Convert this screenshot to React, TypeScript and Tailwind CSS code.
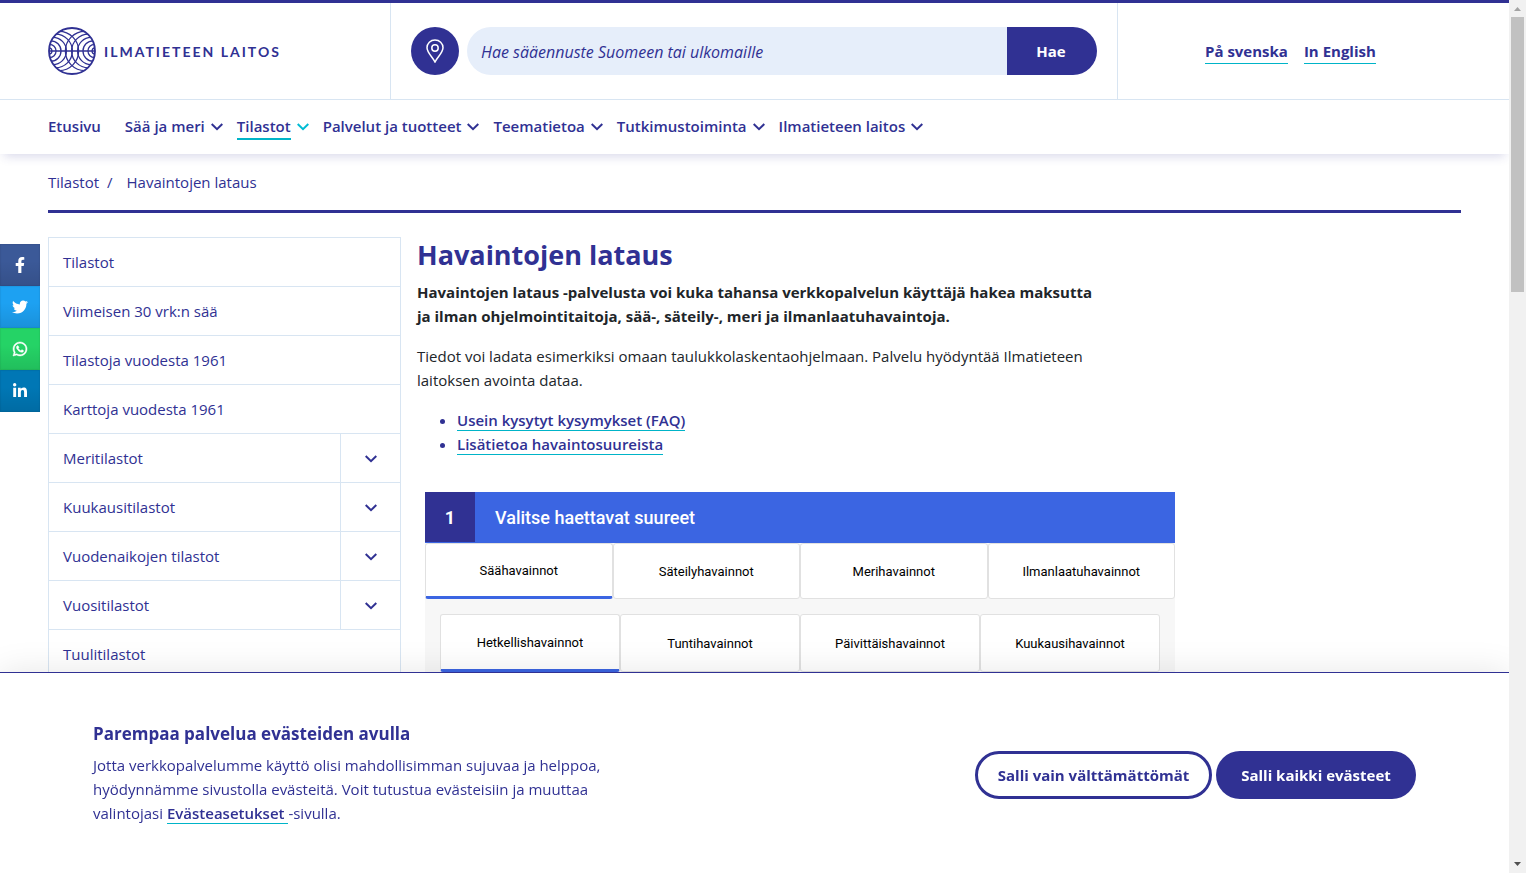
import { FaFacebookF, FaTwitter, FaWhatsapp, FaLinkedinIn } from "react-icons/fa";

const nav = [
  { label: "Etusivu" },
  { label: "Sää ja meri", menu: true },
  { label: "Tilastot", menu: true, active: true },
  { label: "Palvelut ja tuotteet", menu: true },
  { label: "Teematietoa", menu: true },
  { label: "Tutkimustoiminta", menu: true },
  { label: "Ilmatieteen laitos", menu: true },
];

const sections = [
  { label: "Tilastot" },
  { label: "Viimeisen 30 vrk:n sää" },
  { label: "Tilastoja vuodesta 1961" },
  { label: "Karttoja vuodesta 1961" },
  { label: "Meritilastot", menu: true },
  { label: "Kuukausitilastot", menu: true },
  { label: "Vuodenaikojen tilastot", menu: true },
  { label: "Vuositilastot", menu: true },
  { label: "Tuulitilastot" },
];

const shares = [
  { label: "Facebook", Icon: FaFacebookF, color: "bg-[#3b5998]" },
  { label: "Twitter", Icon: FaTwitter, color: "bg-[#1da1f2]" },
  { label: "WhatsApp", Icon: FaWhatsapp, color: "bg-[#25d366]" },
  { label: "LinkedIn", Icon: FaLinkedinIn, color: "bg-[#0077b5]" },
];

const kinds = ["Säähavainnot", "Säteilyhavainnot", "Merihavainnot", "Ilmanlaatuhavainnot"];
const periods = ["Hetkellishavainnot", "Tuntihavainnot", "Päivittäishavainnot", "Kuukausihavainnot"];

function Chevron() {
  return (
    <svg width="12" height="8" viewBox="0 0 12 8" fill="none" stroke="currentColor" strokeWidth="2" aria-hidden="true">
      <path d="M0.7 1 L6 6.2 L11.3 1" />
    </svg>
  );
}

function Logo() {
  // Each arc starts level on the rim of the globe and curves down to its equator.
  const arcs = [3.2, 6.6, 10.2, 13.6, 16.8, 19.6].map((r) => ({ r, c: 24 - Math.sqrt(23.5 * 23.5 - r * r) }));
  return (
    <svg width="48" height="48" viewBox="0 0 48 48" fill="none" stroke="#303193" strokeWidth="1.3" aria-hidden="true">
      <defs>
        <clipPath id="globe">
          <circle cx="24" cy="24" r="23" />
        </clipPath>
      </defs>
      <g clipPath="url(#globe)">
        {arcs.map(({ r, c }) => (
          <g key={r}>
            <path d={`M${c} ${24 - r}A${r} ${r} 0 0 1 ${c} ${24 + r}`} />
            <path d={`M${48 - c} ${24 - r}A${r} ${r} 0 0 0 ${48 - c} ${24 + r}`} />
          </g>
        ))}
        <path d="M1 24H47" />
      </g>
      <circle cx="24" cy="24" r="23" strokeWidth="1.8" />
    </svg>
  );
}

function Header() {
  return (
    <header className="shrink-0 border-t-3 border-[#303193] bg-white shadow-[0_6px_10px_-4px_rgba(48,49,147,0.2)]">
      <div className="flex h-[97px] border-b border-[#d8e5f2]">
        <a href="#" className="flex w-[390px] items-center gap-2 pl-12">
          <Logo />
          <span className="font-[Lato] text-[14px] font-bold tracking-[2px]">ILMATIETEEN LAITOS</span>
        </a>
        <form className="flex flex-1 items-center border-x border-[#d8e5f2] px-5">
          <button type="button" aria-label="Paikanna" className="mr-2 flex size-12 items-center justify-center rounded-full bg-[#303193]">
            <svg width="18" height="24" viewBox="0 0 18 24" fill="none" stroke="white" strokeWidth="1.5" aria-hidden="true">
              <path d="M9 23 C7 18.5 1 13.8 1 8.8 C1 4.3 4.5 1 9 1 C13.5 1 17 4.3 17 8.8 C17 13.8 11 18.5 9 23Z" />
              <circle cx="9" cy="9" r="3.2" />
            </svg>
          </button>
          <input
            type="text"
            aria-label="Hae sääennuste"
            placeholder="Hae sääennuste Suomeen tai ulkomaille"
            className="h-12 min-w-0 flex-1 rounded-l-full bg-[#e6eefa] pt-0.5 pl-[14px] text-[16px] italic outline-none placeholder:text-[#303193]"
          />
          <button type="button" className="h-12 w-[90px] rounded-r-full bg-[#303193] pr-0.5 text-[15px] font-bold text-white">
            Hae
          </button>
        </form>
        <div className="flex w-[391px] items-center gap-4 pt-0.5 pl-[87px] text-[15px] font-bold">
          <a href="#" className="border-b border-[#00b4c8]">På svenska</a>
          <a href="#" className="border-b border-[#00b4c8]">In English</a>
        </div>
      </div>
      <nav className="flex h-[54px] items-center pl-12 text-[15px] leading-[22px] font-semibold">
        {nav.map((item) => (
          <a key={item.label} href="#" className={item.menu ? "mr-[14px] flex items-center gap-[6px]" : "mr-6 flex items-center"}>
            <span className={item.active ? "border-b-2 border-[#00b4c8] pb-px" : "border-b-2 border-transparent pb-px"}>
              {item.label}
            </span>
            {item.menu && (
              <span className={item.active ? "text-[#00bcd4]" : ""}>
                <Chevron />
              </span>
            )}
          </a>
        ))}
      </nav>
    </header>
  );
}

function Sidebar() {
  return (
    <nav aria-label="Tilastot" className="w-[353px] shrink-0 self-start border border-b-0 border-[#d8e5f2] text-[15px]">
      {sections.map((s) => (
        <div key={s.label} className="flex h-[49px] border-b border-[#d8e5f2]">
          <a href="#" className="flex flex-1 items-center pl-[14px]">{s.label}</a>
          {s.menu && (
            <button type="button" aria-label={"Avaa " + s.label} className="flex w-[60px] items-center justify-center border-l border-[#d8e5f2] pt-0.5">
              <Chevron />
            </button>
          )}
        </div>
      ))}
    </nav>
  );
}

function Tabs({ items, tall }: { items: string[]; tall?: boolean }) {
  return (
    <div className="grid grid-cols-4">
      {items.map((label, i) => (
        <button
          key={label}
          type="button"
          className={
            (tall ? "h-[58px] " : "h-14 ") +
            "rounded-[3px] border bg-white text-[13px] text-black " +
            (i === 0 ? "border-[#e1e1e1] border-b-3 border-b-[#3b65e2] pt-0.5" : "border-[#e1e1e1] pt-px")
          }
        >
          {label}
        </button>
      ))}
    </div>
  );
}

function Download() {
  return (
    <section className="mt-9 ml-2 max-w-[750px] bg-[#f7f7f7] font-[Roboto]">
      <div className="flex h-[51px] bg-[#3b65e2] text-white">
        <span className="flex size-[50px] items-center justify-center bg-[#303193] text-[18px] font-bold">1</span>
        <h2 className="flex items-center pl-5 text-[18px] font-medium">Valitse haettavat suureet</h2>
      </div>
      <Tabs items={kinds} />
      <div className="p-[15px]">
        <Tabs items={periods} tall />
      </div>
    </section>
  );
}

function CookieBanner() {
  return (
    <aside className="fixed right-[17px] bottom-0 left-0 flex h-[201px] items-center justify-between border-t border-[#303193] bg-white px-[93px] pt-1 shadow-[0_0_32px_rgba(0,0,0,0.1)]">
      <div className="w-[540px]">
        <h2 className="text-[17px] leading-[26px] font-bold">Parempaa palvelua evästeiden avulla</h2>
        <p className="mt-1.5 mb-1 text-[15px] leading-6">
          Jotta verkkopalvelumme käyttö olisi mahdollisimman sujuvaa ja helppoa, hyödynnämme sivustolla evästeitä. Voit tutustua evästeisiin ja muuttaa valintojasi{" "}
          <a href="#" className="border-b border-[#00b4c8] font-semibold">Evästeasetukset </a>-sivulla.
        </p>
      </div>
      <div className="flex gap-1 text-[15px] font-bold">
        <button type="button" className="h-12 w-[237px] rounded-full border-3 border-[#303193]">Salli vain välttämättömät</button>
        <button type="button" className="h-12 w-[200px] rounded-full bg-[#303193] text-white">Salli kaikki evästeet</button>
      </div>
    </aside>
  );
}

function Scrollbar() {
  return (
    <div aria-hidden="true" className="relative z-10 flex w-[17px] shrink-0 flex-col items-center bg-[#f1f1f1]">
      <svg width="17" height="17" viewBox="0 0 17 17"><path d="M5 11h7L8.5 7z" fill="#a3a3a3" /></svg>
      <div className="h-[275px] w-[13px] bg-[#c1c1c1]" />
      <svg className="mt-auto" width="17" height="17" viewBox="0 0 17 17"><path d="M5 6h7L8.5 10z" fill="#505050" /></svg>
    </div>
  );
}

export default function App() {
  return (
    <div className="flex h-screen overflow-hidden bg-white font-['Open_Sans',sans-serif] text-[#303193]">
      <div className="flex min-w-0 flex-1 flex-col overflow-hidden">
        <Header />
        <div className="mx-12 flex h-[59px] shrink-0 items-center gap-2 border-b-3 border-[#303193] text-[15px]">
          <a href="#">Tilastot</a>
          <span className="mr-1.5">/</span>
          <span>Havaintojen lataus</span>
        </div>
        <div className="flex gap-4 px-12 pt-6">
          <Sidebar />
          <main className="min-w-0 max-w-[758px] flex-1">
            <h1 className="text-[27px] leading-9 font-bold">Havaintojen lataus</h1>
            <p className="mt-[7px] max-w-[684px] text-[15px] leading-6 font-bold text-[#212529]">
              Havaintojen lataus -palvelusta voi kuka tahansa verkkopalvelun käyttäjä hakea maksutta ja ilman ohjelmointitaitoja, sää-, säteily-, meri ja ilmanlaatuhavaintoja.
            </p>
            <p className="mt-4 max-w-[684px] text-[15px] leading-6 text-[#212529]">
              Tiedot voi ladata esimerkiksi omaan taulukkolaskentaohjelmaan. Palvelu hyödyntää Ilmatieteen laitoksen avointa dataa.
            </p>
            <ul className="mt-4 list-disc pl-10 text-[15px] leading-6 font-semibold">
              <li><a href="#" className="border-b border-[#00b4c8]">Usein kysytyt kysymykset (FAQ)</a></li>
              <li><a href="#" className="border-b border-[#00b4c8]">Lisätietoa havaintosuureista</a></li>
            </ul>
            <Download />
          </main>
        </div>
      </div>
      <Scrollbar />
      <div className="fixed top-[244px] left-0 flex flex-col">
        {shares.map(({ label, Icon, color }) => (
          <a key={label} href="#" aria-label={label} className={color + " flex h-[42px] w-10 items-center justify-center bg-linear-to-b from-transparent from-40% to-black/10 pb-px text-[16px] text-white shadow-[inset_0_0_1px_1px_rgba(0,0,0,0.06)]"}>
            <Icon stroke="white" strokeWidth={label === "WhatsApp" ? 16 : 0} />
          </a>
        ))}
      </div>
      <CookieBanner />
    </div>
  );
}
